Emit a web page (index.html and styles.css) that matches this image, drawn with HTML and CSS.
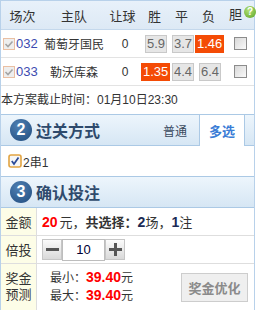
FILE: index.html
```html
<!DOCTYPE html>
<html lang="zh-CN">
<head>
<meta charset="utf-8">
<link rel="stylesheet" href="styles.css">
</head>
<body>
<div class="panel">
  <div class="grid head">
    <div>场次</div><div>主队</div><div>让球</div><div>胜</div><div>平</div><div>负</div>
    <div class="dan">胆<span class="help">?</span></div>
  </div>
  <div class="grid row">
    <div class="mid"><svg class="rchk" width="12" height="12" viewBox="0 0 12 12"><rect x="0.5" y="0.5" width="11" height="11" fill="#eeeeee" stroke="#eabfa3"/><path d="M2.5 6 L5 8.5 L9.5 3.5" fill="none" stroke="#a4a4a4" stroke-width="1.6"/></svg>032</div>
    <div class="team">葡萄牙国民</div>
    <div class="hcp">0</div>
    <div class="odd"><span class="btn">5.9</span></div>
    <div class="odd"><span class="btn">3.7</span></div>
    <div class="odd"><span class="btn on">1.46</span></div>
    <div class="bk"><span class="cb"></span></div>
  </div>
  <div class="grid row">
    <div class="mid"><svg class="rchk" width="12" height="12" viewBox="0 0 12 12"><rect x="0.5" y="0.5" width="11" height="11" fill="#eeeeee" stroke="#eabfa3"/><path d="M2.5 6 L5 8.5 L9.5 3.5" fill="none" stroke="#a4a4a4" stroke-width="1.6"/></svg>033</div>
    <div class="team">勒沃库森</div>
    <div class="hcp">0</div>
    <div class="odd"><span class="btn on">1.35</span></div>
    <div class="odd"><span class="btn">4.4</span></div>
    <div class="odd"><span class="btn">6.4</span></div>
    <div class="bk"><span class="cb"></span></div>
  </div>
  <div class="deadline">本方案截止时间：01月10日23:30</div>

  <div class="sec">
    <span class="num">2</span><span class="title">过关方式</span>
    <div class="tabs"><span class="tab">普通</span><span class="tab active">多选</span></div>
  </div>
  <div class="pass"><svg width="14" height="14" viewBox="0 0 14 14"><rect x="1" y="1" width="12" height="12" rx="2" fill="#f6f6f6" stroke="#e2a442" stroke-width="1.6"/><path d="M3.8 7 L6 10 L10.5 3.6" fill="none" stroke="#2c4b98" stroke-width="1.8"/></svg><span>2串1</span></div>

  <div class="sec">
    <span class="num">3</span><span class="title">确认投注</span>
  </div>
  <div class="crow">
    <div class="lab">金额</div>
    <div class="val amt"><b class="red">20</b><span class="sp">元，</span><b>共选择：</b><b class="n">2</b>场，<b class="n">1</b>注</div>
  </div>
  <div class="crow">
    <div class="lab">倍投</div>
    <div class="val">
      <span class="step"><svg width="13" height="13" viewBox="0 0 13 13"><rect x="0" y="5" width="13" height="3" fill="#555"/></svg></span>
      <span class="qty">10</span>
      <span class="step"><svg width="13" height="13" viewBox="0 0 13 13"><rect x="0" y="5" width="13" height="3" fill="#555"/><rect x="5" y="0" width="3" height="13" fill="#555"/></svg></span>
    </div>
  </div>
  <div class="crow last">
    <div class="lab two">奖金<br>预测</div>
    <div class="val prize">
      <div class="lines">
        <div>最小：<b class="red">39.40</b>元</div>
        <div>最大：<b class="red">39.40</b>元</div>
      </div>
      <span class="opt">奖金优化</span>
    </div>
  </div>
</div>
</body>
</html>
```
FILE: styles.css
```css
body {
  margin: 0;
  font-family: "Liberation Sans", "Noto Sans CJK SC", sans-serif;
  font-size: 12px;
  color: #333;
  background: #fff;
}
.panel {
  width: 255px;
  height: 310px;
  box-sizing: border-box;
  border: 1px solid #b8d1ea;
  border-bottom: 0;
}
.grid {
  display: grid;
  grid-template-columns: 43px 60px 37px 27px 27px 27px 32px;
  align-items: center;
}
.head {
  height: 28px;
  background: linear-gradient(#e8f1fa, #dde9f5);
  border-bottom: 1px solid #c4d8ec;
  text-align: center;
  font-size: 13px;
  color: #333;
}
.head .dan {
  position: relative;
  text-align: left;
  padding-left: 7px;
  height: 28px;
  line-height: 28px;
}
.help {
  position: absolute;
  left: 22px;
  top: 5px;
  width: 12px;
  height: 12px;
  border-radius: 50%;
  background: radial-gradient(circle at 40% 35%, #b4e27a, #5aa322);
  color: #fff;
  font: bold 10px/12px "Liberation Sans", sans-serif;
  text-align: center;
}
.row {
  height: 27px;
  border-bottom: 1px solid #e3e3e3;
}
.mid {
  display: flex;
  align-items: center;
  padding-left: 2px;
  color: #3d4bb0;
  font-size: 13px;
}
.rchk { margin-right: 1px; }
.team { text-align: center; }
.hcp { text-align: center; padding-left: 5px; }
.odd { text-align: right; padding-right: 1px; }
.btn {
  display: inline-block;
  height: 16px;
  line-height: 16px;
  padding: 0 1px;
  border: 1px solid #c9c9c9;
  background: #e6e6e6;
  color: #666;
  font-size: 13px;
}
.btn.on {
  background: #f44b05;
  border-color: #f44b05;
  color: #fff;
}
.bk { display: flex; padding-left: 12px; }
.cb {
  width: 11px;
  height: 11px;
  border: 1px solid #8c8c8c;
  background: linear-gradient(135deg, #d8d8d8, #fafafa);
}
.deadline {
  height: 28px;
  line-height: 28px;
  font-size: 12px;
}
.sec {
  display: flex;
  align-items: center;
  height: 30px;
  background: linear-gradient(#edf5fc, #d6e6f4);
  border-top: 1px solid #abc9e5;
  border-bottom: 1px solid #abc9e5;
}
.num {
  width: 22px;
  height: 22px;
  border-radius: 50%;
  margin-left: 9px;
  margin-right: 4px;
  background: radial-gradient(circle at 40% 30%, #4f80b3, #1f4b7d);
  color: #fff;
  font: bold 16px/22px "Liberation Sans", sans-serif;
  text-align: center;
}
.title {
  font-size: 16px;
  font-weight: bold;
  color: #2e4a6c;
}
.tabs {
  margin-left: auto;
  margin-right: 9px;
  align-self: stretch;
  display: flex;
}
.tab {
  width: 48px;
  display: flex;
  align-items: center;
  justify-content: center;
  font-size: 12px;
  color: #3a4a5e;
}
.tab.active {
  width: 44px;
  background: #fff;
  border-left: 1px solid #abc9e5;
  border-right: 1px solid #abc9e5;
  margin-bottom: -1px;
  color: #3b7dd6;
  font-weight: bold;
  font-size: 13px;
}
.pass {
  height: 30px;
  display: flex;
  align-items: center;
  padding-left: 7px;
}
.pass span { margin-left: 1px; }
.crow {
  display: grid;
  grid-template-columns: 36px 1fr;
  height: 27px;
  border-bottom: 1px solid #dedede;
}
.crow.last { height: 46px; border-bottom: 0; }
.lab {
  box-sizing: border-box;
  background: #fdfde7;
  border-right: 1px solid #dedede;
  display: flex;
  align-items: center;
  justify-content: center;
  font-size: 13px;
  text-align: center;
}
.lab.two { line-height: 16px; }
.val {
  display: flex;
  align-items: center;
  padding-left: 5px;
}
.amt { font-size: 13px; }
.red { color: #f00; font-size: 14px; }
.n { color: #1b2a55; font-size: 14px; }
.sp { margin-left: 2px; }
.step {
  width: 18px;
  height: 19px;
  border: 1px solid #c6c6c6;
  background: linear-gradient(#fbfbfb, #d9d9d9);
  display: flex;
  align-items: center;
  justify-content: center;
}
.qty {
  width: 41px;
  height: 20px;
  border: 1px solid #bdbdbd;
  text-align: center;
  line-height: 20px;
  font-size: 13px;
  color: #000033;
}
.prize {
  padding-left: 13px;
  justify-content: space-between;
  padding-right: 6px;
}
.lines { line-height: 17px; }
.opt {
  width: 65px;
  height: 27px;
  border: 1px solid #cdcdcd;
  background: #efefef;
  color: #8a8a8a;
  font-weight: bold;
  font-size: 13px;
  display: flex;
  align-items: center;
  justify-content: center;
}
```
